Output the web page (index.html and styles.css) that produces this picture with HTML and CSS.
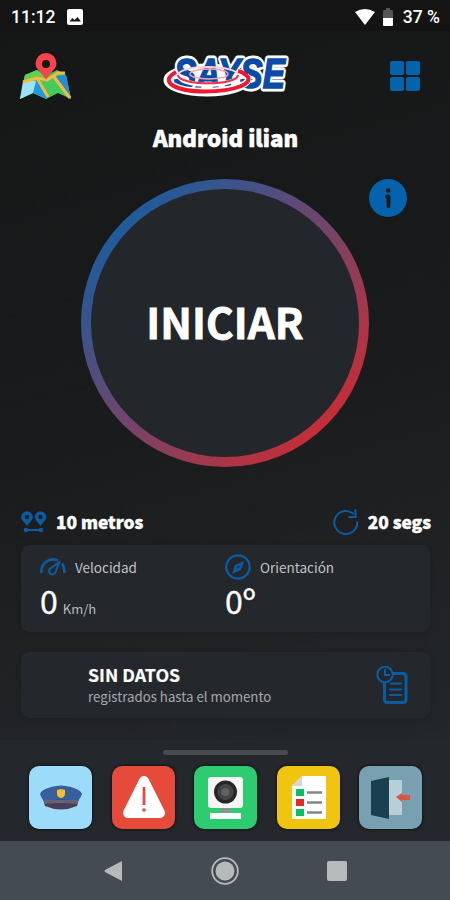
FILE: index.html
```html
<!DOCTYPE html>
<html lang="es">
  <head>
    <meta charset="utf-8">
    <title>SAYSE</title>
    <link rel="stylesheet" href="styles.css">
  </head>
  <body>
    <div class="status">
      <span class="clock">11:12</span>
      <svg class="picture" width="16" height="16" viewBox="0 0 16 16">
        <rect width="16" height="16" rx="2" fill="#fff"/>
        <path d="M2.500 12.500L5.500 9l2 2 3-3 3.500 4.500z" fill="#151515"/>
      </svg>
      <svg class="wifi" width="20" height="16" viewBox="0 0 20 16">
        <path d="M0 3Q10-3 20 3L10 16z" fill="#fff"/>
      </svg>
      <svg class="battery" width="10" height="18" viewBox="0 0 10 18">
        <path d="M3 0h4v2h2q1 0 1 1v8H0V3q0-1 1-1h2z" fill="#555"/>
        <path d="M0 10h10v7q0 1-1 1H1q-1 0-1-1z" fill="#fff"/>
      </svg>
      <span class="percent">37 %</span>
    </div>

    <div class="header">
      <svg class="map" width="52" height="48" viewBox="0 0 52 48">
        <path d="M5 22L17 17 27 22 37 17 46 22 51 46 38 40 26 46 13 40 0 46z" fill="#48c95c"/>
        <path d="M5 22L17 17 25 24 16 27 3 30z" fill="#63cf50"/>
        <path d="M3 28L16 28 13 40 0 46z" fill="#9be3f8"/>
        <path d="M17 26L28 45 26 46 13 40z" fill="#2197dd"/>
        <path d="M36 23L46 22 51 46 47 43z" fill="#238ed2"/>
        <path d="M3 29L17 25 27 27 38 20 45 20" fill="none" stroke="#f4ba42" stroke-width="3"/>
        <path d="M17 25L28 44M34 24L50 45" stroke="#f4ba42" stroke-width="3"/>
        <path d="M26 27C23 20 15.500 17 15.500 10.500a10.500 10.500 0 0 1 21 0C36.500 17 29 20 26 27z" fill="#f5444c"/>
        <circle cx="26" cy="11" r="4" fill="#171717"/>
      </svg>

      <svg class="logo" width="130" height="54" viewBox="0 0 130 54">
        <g fill="#fff" stroke="#fff" stroke-width="7" stroke-linejoin="round">
          <text class="logo-text" x="12" y="39" textLength="111" lengthAdjust="spacingAndGlyphs">SAYSE</text>
          <ellipse cx="45" cy="31" rx="40" ry="13"/>
        </g>
        <text class="logo-text" x="12" y="39" textLength="111" lengthAdjust="spacingAndGlyphs" fill="#0b4ba6" stroke="#0b4ba6" stroke-width="1.500">SAYSE</text>
        <g fill="none">
          <path d="M14 23C-4 33 14 42 43 42C73 42 93 34 84 27" stroke="#fff" stroke-width="6.500"/>
          <path d="M14 23C-4 33 14 42.500 43 42.500C73 42.500 94 34 84 26Q81 23 76 22" stroke="#f0172e" stroke-width="4"/>
          <path d="M16 26C16 40 76 40 76 26" stroke="#fff" stroke-width="3"/>
          <ellipse cx="46" cy="26" rx="30" ry="8" stroke="#fbd0d8" stroke-width="2"/>
          <path d="M16 26C16 37 76 37 76 26" stroke="#ef3048" stroke-width="2"/>
          <ellipse cx="47" cy="25" rx="19" ry="5" stroke="#f5a5b1" stroke-width="1.500"/>
        </g>
      </svg>

      <svg class="grid" width="32" height="32" viewBox="0 0 32 32" fill="#0562ac">
        <rect x="1" y="1" width="14" height="14" rx="2"/>
        <rect x="17" y="1" width="14" height="14" rx="2"/>
        <rect x="1" y="17" width="14" height="14" rx="2"/>
        <rect x="17" y="17" width="14" height="14" rx="2"/>
      </svg>
    </div>

    <h1 class="name">Android ilian</h1>

    <div class="main">
      <div class="start">
        <div class="start-inner"><span>INICIAR</span></div>
      </div>
      <svg class="info" width="38" height="38" viewBox="0 0 38 38">
        <circle cx="19" cy="19" r="19" fill="#0562ac"/>
        <circle cx="19.300" cy="11.500" r="2.200" fill="#161a1d"/>
        <path d="M18 17.500h1.500v9.500" fill="none" stroke="#161a1d" stroke-width="3.800" stroke-linecap="round" stroke-linejoin="round"/>
      </svg>
    </div>

    <div class="limits">
      <svg width="26" height="22" viewBox="0 0 26 22">
        <path d="M6 15C4 11 .3 10 .3 6a5.700 5.700 0 0 1 11.400 0C11.700 10 8 11 6 15zM19.500 15c-2-4-5.700-5-5.700-9a5.700 5.700 0 0 1 11.400 0C25.200 10 21.500 11 19.500 15z" fill="#0b5da3"/>
        <g fill="#1d2022"><circle cx="6" cy="6" r="2.200"/><circle cx="19.500" cy="6" r="2.200"/></g>
        <path d="M5 19h16" stroke="#0b5da3" stroke-width="2"/>
        <g fill="#0b5da3"><circle cx="5" cy="19" r="2.300"/><circle cx="20" cy="19" r="2.300"/></g>
      </svg>
      <b class="meters">10 metros</b>
      <svg class="refresh" width="26" height="26" viewBox="0 0 26 26" fill="none" stroke="#0b5da3" stroke-width="2">
        <path d="M24.300 13A11.500 11.500 0 1 1 20 4.500M22.500 1v7h-6.500" stroke-linecap="round"/>
      </svg>
      <b class="seconds">20 segs</b>
    </div>

    <div class="card values">
      <div class="value">
        <div class="label">
          <svg width="26" height="26" viewBox="0 0 26 26" fill="none" stroke="#0b5da3" stroke-width="2.600">
            <path d="M1.500 19A11.500 12 0 0 1 18 6.700M22 9.500Q24.500 13 24.500 19"/>
            <path d="M19.500 8l-4 10a3.300 3.300 0 1 1-4.500-4z" stroke-width="2" stroke-linejoin="round"/>
          </svg>
          <span>Velocidad</span>
        </div>
        <div class="number">0<small>Km/h</small></div>
      </div>
      <div class="value">
        <div class="label">
          <svg width="26" height="26" viewBox="0 0 26 26">
            <circle cx="13" cy="13" r="11.700" fill="none" stroke="#0b5da3" stroke-width="2.200"/>
            <path d="M19 7L16 16 7 20 10 11z" fill="#0b5da3"/>
            <path d="M12 14l2-2" stroke="#23282c" stroke-width="1.500"/>
          </svg>
          <span>Orientación</span>
        </div>
        <div class="number">0º</div>
      </div>
    </div>

    <div class="card records">
      <div>
        <b>SIN DATOS</b>
        <p>registrados hasta el momento</p>
      </div>
      <svg width="32" height="38" viewBox="0 0 32 38" fill="none" stroke="#0b5da3">
        <path d="M17 7.500h10q3 0 3 3V33.500q0 3-3 3H11.500q-3 0-3-3V17" stroke-width="3"/>
        <path d="M15 17.500h10M14 23.500h11M14 29h11" stroke-width="2" stroke-linecap="round"/>
        <circle cx="9" cy="8.500" r="7.700" stroke-width="2"/>
        <path d="M9 3v6h5" stroke-width="2"/>
      </svg>
    </div>

    <div class="dock">
      <div class="handle"></div>
      <div class="tiles">
        <div class="tile police">
          <svg width="63" height="63" viewBox="0 0 63 63">
            <path d="M14 33L50 33 48 40Q32 47 16 40z" fill="#493f5a"/>
            <path d="M11 28Q14 21 32 19.500Q50 21 53 28Q51 33 49 35Q32 32 15 35Q12 32 11 28z" fill="#365f9b"/>
            <path d="M15 34h34v4Q32 36 15 38z" fill="#666173"/>
            <path d="M28 24l4-1 4 1v4q0 3-4 4-4-1-4-4z" fill="#f5c02c"/>
          </svg>
        </div>
        <div class="tile alert">
          <svg width="63" height="63" viewBox="0 0 63 63">
            <path d="M32 15L16 47h32z" fill="#fff" stroke="#fff" stroke-width="10" stroke-linejoin="round"/>
            <path d="M32 21v18" stroke="#e64a3b" stroke-width="2.800"/>
            <circle cx="32" cy="44" r="1.800" fill="#e64a3b"/>
          </svg>
        </div>
        <div class="tile camera">
          <svg width="63" height="63" viewBox="0 0 63 63">
            <rect x="14" y="11" width="35" height="31" rx="3" fill="#f5f5f5"/>
            <path d="M27 42h9v5h-9z" fill="#8c9292"/>
            <path d="M16 47h31v6H16z" fill="#fff"/>
            <circle cx="31.500" cy="26" r="11.500" fill="#262626"/>
            <circle cx="31.500" cy="26" r="8" fill="#454545"/>
            <circle cx="31.500" cy="26" r="4" fill="#636363"/>
          </svg>
        </div>
        <div class="tile list">
          <svg width="63" height="63" viewBox="0 0 63 63">
            <path d="M25 10h24v43H15V20z" fill="#fff"/>
            <path d="M25 10v10H15z" fill="#d5d5d5"/>
            <path d="M19 23h8v7h-8zM19 43h8v7h-8z" fill="#0abf62"/>
            <path d="M19 33h8v7h-8z" fill="#e42b24"/>
            <path d="M30 26.500h15M30 36.500h15M30 46.500h15" stroke="#858585" stroke-width="2.500"/>
          </svg>
        </div>
        <div class="tile exit">
          <svg width="63" height="63" viewBox="0 0 63 63">
            <path d="M30 14h13v35H30z" fill="#b8cfda"/>
            <path d="M12 15l18-4v42l-18-4z" fill="#193f50"/>
            <path d="M37 31l6-4v2h8v5h-8v2z" fill="#d95745"/>
          </svg>
        </div>
      </div>
    </div>

    <div class="navbar">
      <svg width="18" height="22" viewBox="0 0 18 22"><path d="M18 1v20L1 12q-1-1 0-2z" fill="#b5babb"/></svg>
      <svg width="28" height="28" viewBox="0 0 28 28">
        <circle cx="14" cy="14" r="12.800" fill="none" stroke="#b5babb" stroke-width="1.800"/>
        <circle cx="14" cy="14" r="9.500" fill="#b5babb"/>
      </svg>
      <svg width="20" height="20" viewBox="0 0 20 20"><rect width="20" height="20" rx="2" fill="#b5babb"/></svg>
    </div>
  </body>
</html>
```
FILE: styles.css
```css
* {
  box-sizing: border-box;
}

body {
  margin: 0;
  width: 450px;
  height: 900px;
  overflow: hidden;
  display: flex;
  flex-direction: column;
  color: #fff;
  background: linear-gradient(165deg, #151616 0%, #1a1b1c 45%, #24272a 85%);
  font-family: 'Noto Sans CJK SC', 'Open Sans', sans-serif;
}

svg {
  display: block;
  flex: none;
}

.status {
  height: 31px;
  padding: 2px 10px 0 11px;
  display: flex;
  align-items: center;
  background: #141414;
  font: 500 17.500px/30px Roboto, sans-serif;
}

.picture {
  margin-left: 12px;
}

.wifi {
  margin-left: auto;
}

.battery {
  margin: 0 10px 0 8px;
}

.header {
  height: 89px;
  padding: 0 29px 0 20px;
  display: flex;
  align-items: center;
}

.map {
  margin-top: 2px;
}

.logo {
  margin-left: 90px;
  overflow: visible;
}

.logo-text {
  font: italic 900 43px 'Liberation Sans', sans-serif;
}

.grid {
  margin-left: auto;
}

.name {
  margin: 0;
  height: 59px;
  padding-left: 1px;
  font-size: 22.300px;
  font-weight: 900;
  line-height: 34px;
  text-align: center;
  -webkit-text-stroke: .6px #fff;
}

.main {
  position: relative;
  height: 288px;
}

.start {
  width: 288px;
  height: 288px;
  margin: 0 auto;
  padding: 10px;
  border-radius: 50%;
  background: linear-gradient(135deg, #205b9b 15%, #c32e39 85%);
}

.start-inner {
  height: 100%;
  padding-bottom: 4px;
  display: flex;
  align-items: center;
  justify-content: center;
  border-radius: 50%;
  background: #23272b;
  font-size: 42.300px;
  font-weight: 700;
  line-height: 60px;
  -webkit-text-stroke: .8px #fff;
}

.info {
  position: absolute;
  top: 0;
  right: 43px;
}

.limits {
  height: 46px;
  margin: 32px 19px 0 21px;
  display: flex;
  align-items: center;
  font-size: 17.300px;
}

.limits b {
  margin: -2px 0 0 9px;
  font-weight: 900;
  -webkit-text-stroke: .4px #fff;
}

.limits .refresh {
  margin-left: auto;
}

.card {
  margin: 0 20px 0 21px;
  border-radius: 8px;
  background: #24282c;
  box-shadow: 0 1px 5px rgba(0, 0, 0, .15);
}

.values {
  height: 87px;
  padding: 9px 19px;
  display: flex;
}

.value {
  width: 185px;
}

.label {
  height: 26px;
  display: flex;
  align-items: center;
  gap: 9px;
  color: #c0c2c4;
  font-size: 13.500px;
  line-height: 20px;
}

.number {
  font-size: 32px;
  line-height: 40px;
  -webkit-text-stroke: .3px #fff;
}

.number small {
  margin-left: 5px;
  color: #b9bbbd;
  font-size: 13px;
  -webkit-text-stroke: 0;
}

.records {
  height: 66px;
  margin-top: 20px;
  padding: 0 22px 0 67px;
  display: flex;
  align-items: center;
  justify-content: space-between;
}

.records b {
  display: block;
  font-size: 17.800px;
  font-weight: 700;
  line-height: 24px;
  -webkit-text-stroke: .2px #fff;
}

.records p {
  margin: 0;
  color: #a6a8aa;
  font-size: 13.250px;
  line-height: 22px;
}

.dock {
  height: 101px;
  margin-top: 22px;
  padding: 10px 28px 0 29px;
  background: #24272b;
}

.handle {
  width: 125px;
  height: 5px;
  margin: 0 auto 11px;
  border-radius: 3px;
  background: #484a4d;
}

.tiles {
  display: flex;
  justify-content: space-between;
}

.tile {
  width: 63px;
  height: 63px;
  border-radius: 10px;
  box-shadow: 0 0 2px 1px #15181a;
}

.police { background: #9cdcfa; }
.alert { background: #e64a3b; }
.camera { background: #2ecc71; }
.list { background: #f1c40f; }
.exit { background: #78a0b1; }

.navbar {
  flex: 1;
  display: flex;
  align-items: center;
  justify-content: space-between;
  padding: 0 103px 0 104px;
  background: #454c51;
}
```
